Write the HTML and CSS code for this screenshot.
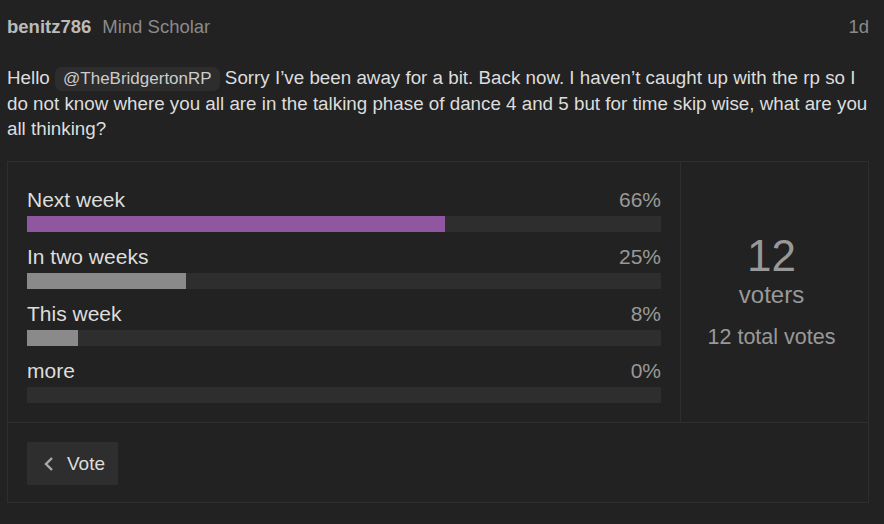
FILE: index.html
```html
<!DOCTYPE html>
<html lang="en">
<head>
    <meta charset="UTF-8">
    <title>Poll post</title>
    <link rel="stylesheet" href="styles.css">
</head>
<body>

<div class="post">
    <div class="post-head">
        <span class="username">benitz786</span>
        <span class="title">Mind Scholar</span>
        <span class="date">1d</span>
    </div>

    <div class="post-body">
        Hello <span class="mention">@TheBridgertonRP</span> Sorry I’ve been away for a bit. Back now. I haven’t caught up with the rp so I do not know where you all are in the talking phase of dance 4 and 5 but for time skip wise, what are you all thinking?
    </div>

    <div class="poll">
        <div class="poll-main">
            <ul class="results">
                <li>
                    <div class="label"><span>Next week</span><span class="pct">66%</span></div>
                    <div class="bar"><div class="fill leading" style="width: 66%"></div></div>
                </li>
                <li>
                    <div class="label"><span>In two weeks</span><span class="pct">25%</span></div>
                    <div class="bar"><div class="fill" style="width: 25%"></div></div>
                </li>
                <li>
                    <div class="label"><span>This week</span><span class="pct">8%</span></div>
                    <div class="bar"><div class="fill" style="width: 8%"></div></div>
                </li>
                <li>
                    <div class="label"><span>more</span><span class="pct">0%</span></div>
                    <div class="bar"><div class="fill" style="width: 0%"></div></div>
                </li>
            </ul>
            <div class="info">
                <div class="count">12</div>
                <div class="count-label">voters</div>
                <div class="total">12 total votes</div>
            </div>
        </div>
        <div class="poll-buttons">
            <button class="btn">
                <svg width="12" height="16" viewBox="0 0 12 16"><path d="M9 2 L3 8 L9 14" fill="none" stroke="#aaa" stroke-width="2.4"/></svg>
                Vote
            </button>
        </div>
    </div>
</div>

</body>
</html>
```

FILE: styles.css
```css
body { margin: 0; background: #222; color: #ddd; font-family: "Liberation Sans", Arial, sans-serif; }
.post { padding: 16px 15px 20px 7px; }
.post-head { display: flex; align-items: baseline; font-size: 18.5px; height: 30px; }
.username { font-weight: bold; color: #bbb; }
.title { color: #8a8a8a; margin-left: 11px; }
.date { margin-left: auto; color: #8a8a8a; }
.post-body { font-size: 18.8px; line-height: 25px; margin-top: 19px; color: #ddd; }
.mention { display: inline-block; background: #2d2d2d; color: #ccc; font-size: 17px; line-height: 20px; padding: 2px 8px; border-radius: 7px; }
.poll { border: 1px solid #2e2e2e; margin-top: 20px; }
.poll-main { display: flex; border-bottom: 1px solid #2e2e2e; }
.results { list-style: none; margin: 0; padding: 25px 19px 19px 19px; flex: 1; }
.results li { margin-bottom: 12px; }
.results li:last-child { margin-bottom: 0; }
.label { display: flex; justify-content: space-between; font-size: 21px; line-height: 25px; margin-bottom: 4px; color: #ddd; }
.pct { color: #999; }
.bar { height: 16px; background: #2e2e2e; }
.fill { height: 100%; background: #8a8a8a; }
.fill.leading { background: #9156a0; }
.info { width: 181px; padding: 0 6px 4px 0; border-left: 1px solid #2e2e2e; display: flex; flex-direction: column; align-items: center; justify-content: center; color: #999; }
.count { font-size: 44px; line-height: 50px; }
.count-label { font-size: 24px; line-height: 27px; }
.total { font-size: 21.5px; margin-top: 17px; }
.poll-buttons { padding: 19px 19px 17px 19px; }
.btn { display: flex; align-items: center; gap: 12px; background: #2e2e2e; color: #ddd; border: none; font-family: inherit; font-size: 19px; height: 43px; padding: 0 13px 0 16px; cursor: pointer; }
```
